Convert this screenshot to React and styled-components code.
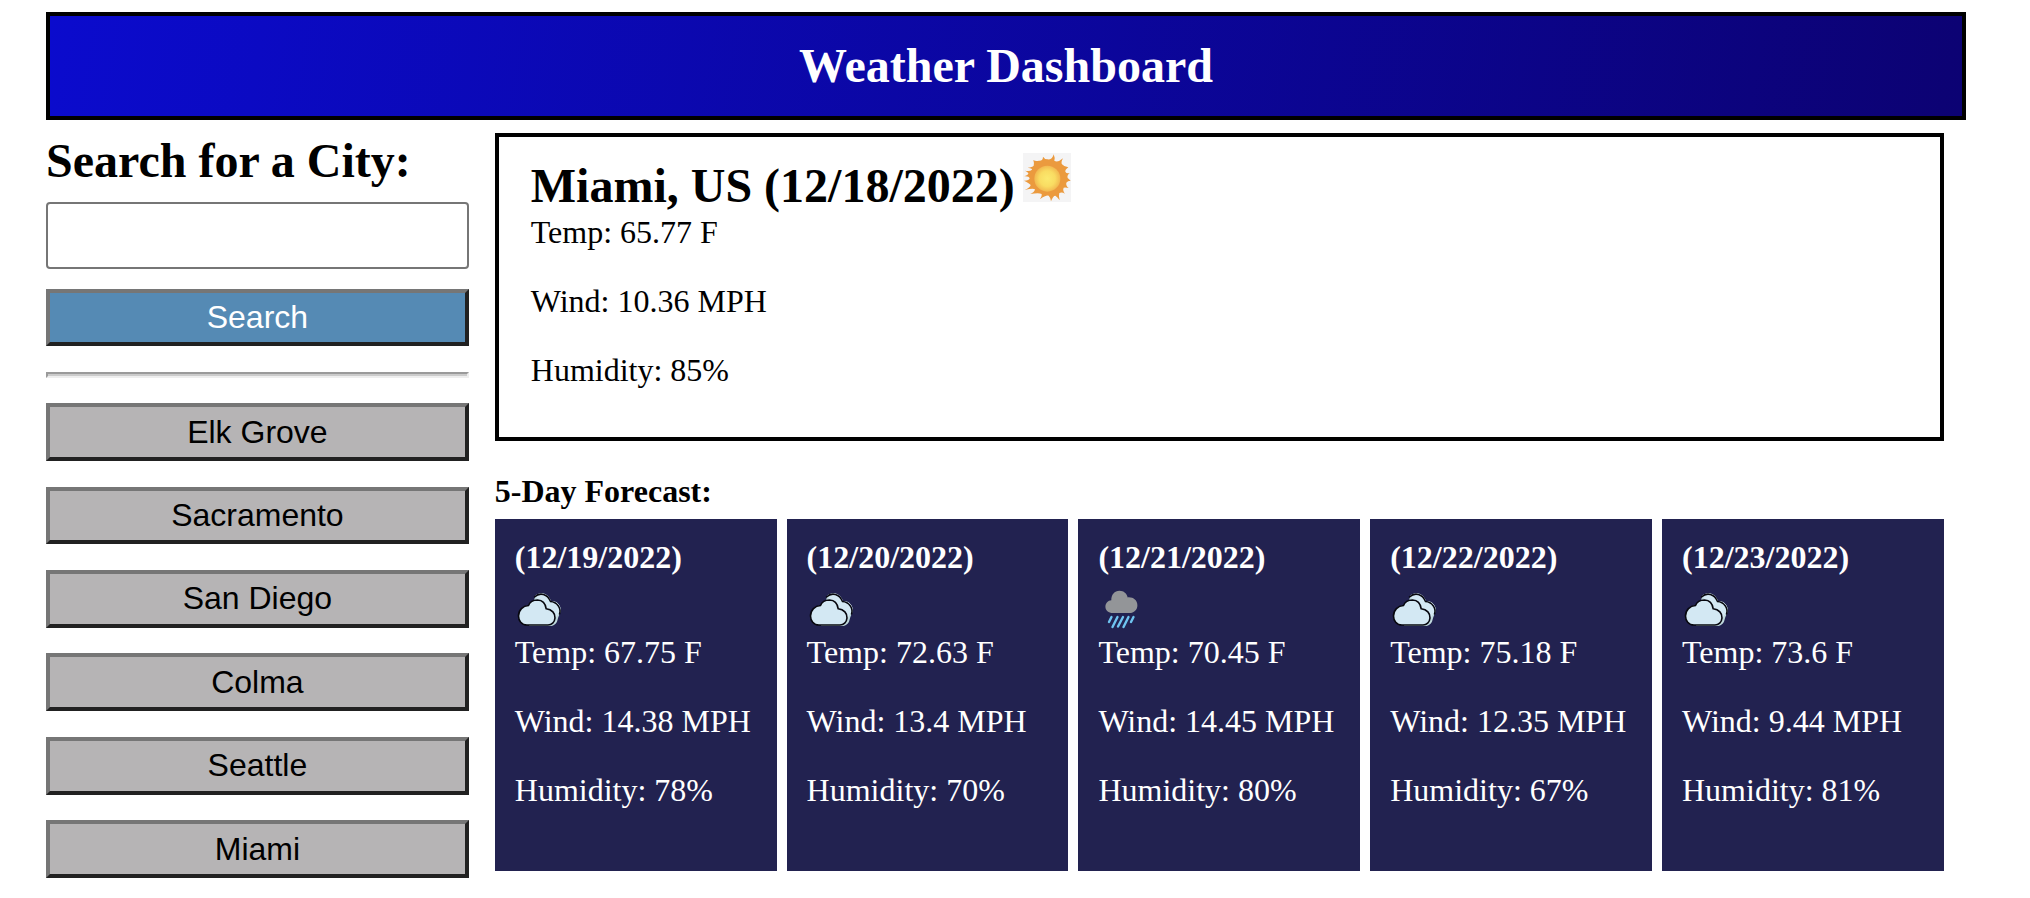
import React from "react";
import styled, { createGlobalStyle } from "styled-components";

const GlobalStyle = createGlobalStyle`
  * { box-sizing: border-box; }
  body {
    margin: 0;
    background: #fff;
    color: #000;
    font-family: "Liberation Serif", "Times New Roman", serif;
    font-size: 32px;
    line-height: 37px;
  }
  h1, h2, h3, p { margin: 0; }
`;

const Page = styled.div`
  width: 2030px;
  height: 898px;
  padding: 12px 64px 0 46px;
  overflow: hidden;
`;

const Header = styled.header`
  height: 108px;
  border: 4px solid #000;
  background: linear-gradient(100deg, #0b0bcd, #0c0273);
  display: flex;
  align-items: center;
  justify-content: center;
`;

const Title = styled.h1`
  color: #fff;
  font-size: 48px;
  line-height: 55px;
  padding-bottom: 2px;
`;

const Columns = styled.div`
  display: flex;
  align-items: flex-start;
  gap: 26px;
  padding: 13px 22.2px 0 0;
`;

const Sidebar = styled.aside`
  width: 422.8px;
  flex: none;
  display: flex;
  flex-direction: column;
`;

const Heading = styled.h2`
  font-size: 48px;
  line-height: 55px;
`;

const CityInput = styled.input`
  height: 67px;
  margin: 14px 0 20px;
  padding: 0 12px;
  border: 2px solid #767676;
  border-radius: 4px;
  font: 32px "Liberation Sans", Arial, sans-serif;
  outline: none;
`;

const Button = styled.button`
  height: ${(p) => (p.$primary ? "57px" : "57.8px")};
  padding: 0;
  border: 4px solid;
  border-color: #767676 #212121 #212121 #767676;
  background: ${(p) => (p.$primary ? "#558ab4" : "#b6b4b5")};
  color: ${(p) => (p.$primary ? "#fff" : "#000")};
  font: 32px/37px "Liberation Sans", Arial, sans-serif;
`;

const Divider = styled.hr`
  width: 100%;
  height: 6px;
  margin: 26px 0 25.3px;
  border: 2px solid;
  border-color: #9a9a9a #eee #eee #9a9a9a;
  background: #cbcbcb;
`;

const History = styled.div`
  display: flex;
  flex-direction: column;
  gap: 25.6px;
`;

const Main = styled.main`
  flex: 1;
  min-width: 0;
`;

const Today = styled.section`
  height: 308px;
  border: 4px solid #000;
  padding: 16px 32px;
`;

const TodayTitle = styled(Heading)`
  display: flex;
  align-items: flex-start;
  gap: 8px;
  height: 61px;

  span { padding-top: 5px; }
`;

const Stats = styled.div`
  display: flex;
  flex-direction: column;
  gap: 32px;
`;

const ForecastTitle = styled.h3`
  font-size: 32px;
  margin: 32px 0 9px;
`;

const Forecast = styled.section`
  display: grid;
  grid-template-columns: repeat(5, minmax(0, 1fr));
  gap: 10px;
`;

const Card = styled.article`
  height: 352px;
  padding: 20px;
  background: #222250;
  color: #fff;
  white-space: nowrap;
`;

const CardDate = styled.h3`
  font-size: 32px;
  margin-bottom: 10px;
`;

const Icon = styled.svg`
  display: block;
  flex: none;
  width: 48px;
  height: ${(p) => p.$height || 48}px;
`;

function SunIcon() {
  return (
    <Icon $height={49} viewBox="0 0 144 147">
      <defs>
        <radialGradient id="sun">
          <stop offset="0" stopColor="#fbe96f" />
          <stop offset="0.6" stopColor="#f9dc62" />
          <stop offset="1" stopColor="#f2b850" />
        </radialGradient>
      </defs>
      <rect width="144" height="147" fill="#f4f4f5" />
      <path
        fill="#eb9a3e"
        d="M31 21Q38 26 48 23Q60 24 60 11Q66 20 74 19Q88 22 92 4Q97 16 94 23Q104 30 120 16Q113 28 117 34Q124 42 136 43Q126 50 127 56Q130 62 140 60Q131 68 134 75L143 83Q134 83 130 89Q128 98 137 105Q127 102 122 104Q118 112 126 122Q116 116 109 120Q106 128 110 142Q103 132 97 128Q90 128 84 145Q82 132 77 128Q68 126 51 139Q58 130 56 123Q48 118 22 123Q34 118 36 109Q30 105 5 111Q22 104 23 96Q20 91 3 83Q19 83 20 76Q18 69 4 70Q17 66 16 61Q14 57 6 53Q20 56 26 51Q31 46 14 44Q28 43 32 38Q34 30 31 21Z"
      />
      <circle cx="73" cy="77" r="39" fill="url(#sun)" />
    </Icon>
  );
}

function CloudIcon() {
  return (
    <Icon viewBox="0 0 48 48">
      <path
        fill="#bfd9dd"
        d="M20 10C25 5 33 7 36 15c7 0 11 6 9.500 11-1 3-2.500 5-3 8-1 4-4 6-8 6H14Z"
      />
      <path
        fill="#d3e8f3"
        d="M20 10C25 5 33 7 36 15c7 0 10 5 9.500 10L39 34Z"
      />
      <path
        fill="none"
        stroke="#07070e"
        strokeWidth="1.500"
        strokeLinecap="round"
        d="M19.500 11C25 5.800 32.500 8 35.500 15.500c6.500.5 11 6.500 9 12.500"
      />
      <path
        fill="#d3e8f3"
        stroke="#07070e"
        strokeWidth="1.600"
        strokeLinejoin="round"
        d="M12 39C6.500 39 3.500 34.500 3.500 30c0-6 4.500-10.300 10-10.500C15 15.500 19 14 22.500 14c5 .2 8 3.800 8.700 8.800 5.800.5 9.100 4.700 8.800 9.200-.3 4.300-3.500 7-7 7Z"
      />
    </Icon>
  );
}

function RainIcon() {
  return (
    <Icon viewBox="0 0 48 48">
      <path
        fill="#939598"
        d="M15 27c-4.600 0-7.600-2.700-7.600-6.300 0-3.500 2.600-6.200 5.900-6.400C13.200 8.700 16.500 4.700 21.500 4.700c4.300 0 7.300 2.800 8.200 6.700 5.200-.6 9.700 2.700 9.700 7.800 0 4.600-3.400 7.800-8 7.800Z"
      />
      <path
        stroke="#6fc4f0"
        strokeWidth="2.400"
        strokeLinecap="round"
        d="m13.500 31-2.500 5M19.500 31l-5 10M25 31l-5 9.500M30.500 31l-5 10M35.500 31 33 36"
      />
    </Icon>
  );
}

const icons = { cloud: CloudIcon, rain: RainIcon };

const cities = ["Elk Grove", "Sacramento", "San Diego", "Colma", "Seattle", "Miami"];

const days = [
  { date: "12/19/2022", icon: "cloud", temp: "67.75", wind: "14.38", humidity: 78 },
  { date: "12/20/2022", icon: "cloud", temp: "72.63", wind: "13.4", humidity: 70 },
  { date: "12/21/2022", icon: "rain", temp: "70.45", wind: "14.45", humidity: 80 },
  { date: "12/22/2022", icon: "cloud", temp: "75.18", wind: "12.35", humidity: 67 },
  { date: "12/23/2022", icon: "cloud", temp: "73.6", wind: "9.44", humidity: 81 },
];

function Readings({ temp, wind, humidity }) {
  return (
    <Stats>
      <p>{`Temp: ${temp} F`}</p>
      <p>{`Wind: ${wind} MPH`}</p>
      <p>{`Humidity: ${humidity}%`}</p>
    </Stats>
  );
}

function DayCard({ day }) {
  const WeatherIcon = icons[day.icon];
  return (
    <Card>
      <CardDate>{`(${day.date})`}</CardDate>
      <WeatherIcon />
      <Readings temp={day.temp} wind={day.wind} humidity={day.humidity} />
    </Card>
  );
}

export default function App() {
  return (
    <>
      <GlobalStyle />
      <Page>
        <Header>
          <Title>Weather Dashboard</Title>
        </Header>
        <Columns>
          <Sidebar>
            <Heading>Search for a City:</Heading>
            <CityInput type="text" aria-label="City" />
            <Button $primary>Search</Button>
            <Divider />
            <History>
              {cities.map((city) => (
                <Button key={city}>{city}</Button>
              ))}
            </History>
          </Sidebar>
          <Main>
            <Today>
              <TodayTitle>
                <span>Miami, US (12/18/2022)</span>
                <SunIcon />
              </TodayTitle>
              <Readings temp="65.77" wind="10.36" humidity={85} />
            </Today>
            <ForecastTitle>5-Day Forecast:</ForecastTitle>
            <Forecast>
              {days.map((day) => (
                <DayCard key={day.date} day={day} />
              ))}
            </Forecast>
          </Main>
        </Columns>
      </Page>
    </>
  );
}
